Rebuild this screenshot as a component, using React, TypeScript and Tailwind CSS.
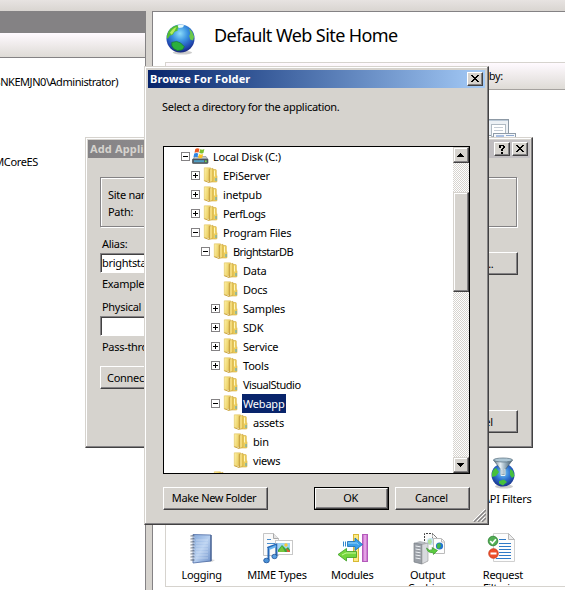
import React from "react";

const raised =
  "border border-t-white border-l-white border-r-[#424142] border-b-[#424142] shadow-[inset_-1px_-1px_0_#848284] bg-[#d6d3ce]";
const raisedSoft =
  "border border-t-[#d6d3ce] border-l-[#d6d3ce] border-r-[#424142] border-b-[#424142] shadow-[inset_-1px_-1px_0_#848284,inset_1px_1px_0_#ffffff] bg-[#d6d3ce]";
const checker =
  "bg-[conic-gradient(#ffffff_25%,#d6d3ce_0_50%,#ffffff_0_75%,#d6d3ce_0)] bg-[length:2px_2px]";

function PlusMinus({ kind }: { kind: string }) {
  return (
    <svg width="9" height="9" shapeRendering="crispEdges" className="block">
      <rect x="0.5" y="0.5" width="8" height="8" fill="#fff" stroke="#848284" />
      <rect x="2" y="4" width="5" height="1" fill="#000" />
      {kind === "+" && <rect x="4" y="2" width="1" height="5" fill="#000" />}
    </svg>
  );
}

function Folder() {
  return (
    <svg width="16" height="16" className="block">
      <defs>
        <linearGradient id="fa" x1="0" y1="0" x2="1" y2="0.3">
          <stop offset="0" stopColor="#fdf2a6" />
          <stop offset="1" stopColor="#e8c858" />
        </linearGradient>
        <linearGradient id="fb" x1="0" y1="0" x2="1" y2="0">
          <stop offset="0" stopColor="#b98f30" />
          <stop offset="0.45" stopColor="#fbe78e" />
          <stop offset="1" stopColor="#e5c04a" />
        </linearGradient>
      </defs>
      <path d="M8 2.500h5.500q.8 0 .8.8v4.700l.7.700v5.500q0 .8-.8.8H8z" fill="#edcf5e" stroke="#d4ad40" strokeWidth=".6" />
      <path d="M14 11v3" stroke="#4ba6cf" strokeWidth="1" />
      <path d="M12.500 3.500v6" stroke="#fff6bc" strokeWidth="1" />
      <path d="M2.300 .8h6.200v13h-6.200z" fill="url(#fa)" stroke="#dfc059" strokeWidth=".6" />
      <path d="M7 2.300l4-1v12.800L7 15.600z" fill="url(#fb)" stroke="#c6a13c" strokeWidth=".5" />
      <path d="M2.300 13.700l4.700 1.800" stroke="#cba53e" strokeWidth="1" />
    </svg>
  );
}

function Disk() {
  return (
    <svg width="17" height="16" className="block">
      <path d="M3 8.500h11l2 3H1z" fill="#c3c9ce" stroke="#7e868c" strokeWidth=".6" />
      <rect x=".3" y="11" width="15.700" height="4.500" rx="1" fill="#566068" stroke="#3b4449" strokeWidth=".6" />
      <rect x="2" y="12.200" width="10" height="2" fill="#4f9ec4" />
      <rect x="13" y="12.500" width="1.600" height="1.600" fill="#6ee04c" />
      <path d="M3.300 1q2-1.500 4.200-.2L6.600 4.600q-2-1-4.100.2z" fill="#ec5b24" />
      <path d="M8.200 1.300q2 1 4.200-.2L11.400 5q-2 1.100-4.200.1z" fill="#7fc32f" />
      <path d="M2.200 5.600Q4.200 4.500 6.300 5.500l-.9 3.800q-1.900-1-4 .1z" fill="#2f86e4" />
      <path d="M7 6q2 1 4.200 0l-1 3.700q-2 1-4.100 0z" fill="#fdc321" />
    </svg>
  );
}

function Globe({ size }: { size: number }) {
  return (
    <svg width={size} height={size} viewBox="0 0 32 32" className="block">
      <defs>
        <radialGradient id="gl" cx=".48" cy=".32" r=".7">
          <stop offset="0" stopColor="#8cdcfa" />
          <stop offset=".4" stopColor="#3a92e0" />
          <stop offset=".8" stopColor="#1f45ae" />
          <stop offset="1" stopColor="#141f70" />
        </radialGradient>
      </defs>
      <ellipse cx="18" cy="29.500" rx="10" ry="2" fill="#aaa" opacity=".6" />
      <circle cx="16" cy="15" r="14.500" fill="url(#gl)" />
      <path d="M2 12Q4 3 13 1l2 2-2 2 0 2-3 1-2 3-3 1-2 3-1 0z" fill="#55bd32" />
      <path d="M5 9q3-5 7-6l-2 4-3 4z" fill="#c6f264" opacity=".85" />
      <path d="M25 5l3 3 2 5-1 4-3-1-1-4 1-2z" fill="#6cc94a" />
      <path d="M7 19l5-1 4 1.500 4 4-2 3-5 1-4-2-2-3z" fill="#2bb03c" stroke="#167627" strokeWidth=".7" />
      <path d="M13 1.500q3-1.500 7 0l-2 2-4 .5z" fill="#e5fbfc" />
    </svg>
  );
}

function FilterGlobe() {
  return (
    <svg width="32" height="32" viewBox="0 0 32 32" className="block">
      <defs>
        <radialGradient id="fg" cx=".5" cy=".4" r=".65">
          <stop offset="0" stopColor="#7bd0f8" />
          <stop offset=".5" stopColor="#2c71d0" />
          <stop offset="1" stopColor="#16277f" />
        </radialGradient>
        <linearGradient id="fn" x1="0" x2="1" y1="0" y2="0">
          <stop offset="0" stopColor="#4d6373" />
          <stop offset=".35" stopColor="#e7f2f8" />
          <stop offset=".65" stopColor="#8ea6b5" />
          <stop offset="1" stopColor="#3d5464" />
        </linearGradient>
      </defs>
      <ellipse cx="17" cy="29.500" rx="9" ry="2" fill="#aaa" opacity=".6" />
      <circle cx="16" cy="18" r="11.500" fill="url(#fg)" />
      <path d="M5 16q1-4 4-5l3 4-3 4-4 1zM23 12l3 2 1.500 5-2.500 2-2-3zM12 24l5-1.500 3 2.500-4 3.500-4-2z" fill="#46c03c" />
      <path d="M6.500 3l7.500 10v5h4v-5L25.500 3z" fill="url(#fn)" stroke="#415766" strokeWidth=".6" />
      <ellipse cx="16" cy="3" rx="9.500" ry="2" fill="#aec7d5" stroke="#556c7b" strokeWidth=".7" />
      <path d="M14 12v6.500h4V12" fill="none" stroke="#e6f3f8" strokeWidth="1" />
    </svg>
  );
}

function Notebook() {
  return (
    <svg width="32" height="32" className="block">
      <defs>
        <linearGradient id="nb" x1="0" y1="0" x2="1" y2="1">
          <stop offset="0" stopColor="#86a9da" />
          <stop offset=".5" stopColor="#b8d0f0" />
          <stop offset="1" stopColor="#6d90c8" />
        </linearGradient>
      </defs>
      <path d="M24 26l5 1-3 2H10z" fill="#ccc" opacity=".7" />
      <path d="M7 1.500l18 .5V28L7 30z" fill="url(#nb)" stroke="#4d6ba4" strokeWidth=".8" />
      <path d="M25 2v26" stroke="#46608f" strokeWidth="1.200" />
      <path d="M10 7h12M10 10h12M10 13h12M10 16h12M10 19h12M10 22h12M10 25h12" stroke="#e0ebfa" strokeWidth=".7" opacity=".7" />
      <path d="M4.500 3h4M4.500 6h4M4.500 9h4M4.500 12h4M4.500 15h4M4.500 18h4M4.500 21h4M4.500 24h4M4.500 27h4" stroke="#5b6573" strokeWidth="1.200" />
      <path d="M4.500 4h4M4.500 7h4M4.500 10h4M4.500 13h4M4.500 16h4M4.500 19h4M4.500 22h4M4.500 25h4" stroke="#e4e8ee" strokeWidth=".8" />
    </svg>
  );
}

function Mime() {
  return (
    <svg width="32" height="32" className="block">
      <path d="M2.500 .5h10l5 5v17h-15z" fill="#fafafa" stroke="#c5c5c5" />
      <path d="M12.500 .5v5h5" fill="#e5e5e5" stroke="#aaa" />
      <path d="M6 6.500h4M6 10.500h8M6 14.500h6" stroke="#4b8dcb" />
      <rect x="14.500" y="7.500" width="17" height="14" fill="#fff" stroke="#c8c8c8" />
      <rect x="17" y="10" width="12" height="9" fill="#9ed4f6" />
      <path d="M17 17l4-5 4 4 2-2 2 3v2H17z" fill="#35a83d" />
      <path d="M17 19l4-6 3 6z" fill="#77c53d" />
      <circle cx="25" cy="12" r="1.700" fill="#fbcb38" />
      <path d="M25 15l4 3v1h-3z" fill="#d95c36" />
      <path d="M7.500 27V14.500l8-3V23" fill="none" stroke="#2566b5" strokeWidth="2" />
      <path d="M8 16l7-3" stroke="#65b2ef" strokeWidth="2" />
      <ellipse cx="5.500" cy="27.500" rx="2.800" ry="2.300" fill="#4a92d8" stroke="#1d4f94" strokeWidth=".8" />
      <ellipse cx="13.500" cy="23.500" rx="2.600" ry="2.200" fill="#5aa0e2" stroke="#1d4f94" strokeWidth=".8" />
    </svg>
  );
}

function Modules() {
  return (
    <svg width="32" height="32" className="block">
      <defs>
        <linearGradient id="pp" x1="0" x2="1" y1="0" y2="0">
          <stop offset="0" stopColor="#b654bd" />
          <stop offset=".5" stopColor="#efb4ee" />
          <stop offset="1" stopColor="#b95cc0" />
        </linearGradient>
      </defs>
      <rect x="17.500" y="1.500" width="5" height="27" fill="#fcea86" stroke="#d8b934" />
      <rect x="26.500" y="1.500" width="5" height="27" fill="url(#pp)" stroke="#b45abb" />
      <path d="M11.500 8.500h7.500V5l7.500 6.500-7.500 6v-4h-7.500z" fill="#3ba0ea" stroke="#176cb5" strokeWidth=".8" />
      <path d="M7.500 8.500v5M9.500 8.500v5" stroke="#3187cd" strokeWidth="1" />
      <path d="M12 10h8.500l2 1.500" fill="none" stroke="#9edbff" />
      <path d="M20.500 18.500h-10V15.500l-8.500 6 8.500 6.500v-3.500h10z" fill="#73d53c" stroke="#3b9d24" strokeWidth=".8" />
      <path d="M20 20h-10l-4 2" fill="none" stroke="#c6f998" />
    </svg>
  );
}

function OutputCaching() {
  return (
    <svg width="34" height="33" className="block">
      <path d="M13.500 14V.5h8l5 5V16" fill="#fafafa" stroke="#444" strokeDasharray="2 1" />
      <path d="M21.500 .5v5h4" fill="none" stroke="#888" strokeDasharray="2 1" />
      <circle cx="19.500" cy="8.500" r="3.500" fill="#c3e4f2" />
      <path d="M17 7l3-1 1 3-2 3-2-2z" fill="#b4e09e" />
      <path d="M22.500 5.500h8l3 3v12h-11z" fill="#fdfdfd" stroke="#bbb" />
      <path d="M30.500 6v3h3" fill="none" stroke="#bbb" />
      <circle cx="28.500" cy="13" r="3.600" fill="#2374ce" />
      <path d="M26 11l3-1 1 3-2 3-2-1z" fill="#41b647" />
      <path d="M3 10l6-2 8 2v18l-6 3-8-2z" fill="#b8bcc1" />
      <path d="M3 10l8 1.500V31l-8-2z" fill="#9a9fa6" stroke="#7b8188" strokeWidth=".7" />
      <path d="M11 11.500l6-1.500v18l-6 3z" fill="#d8dade" stroke="#999" strokeWidth=".6" />
      <path d="M4.500 13l5 .8M4.500 16l5 .8M4.500 19l5 .8M4.500 22l5 .8M4.500 25l5 .8" stroke="#eef1f4" />
      <path d="M15.500 15q3 3.500 6 1.500l-.5-2 5.500 3-4 4-.7-2q-5 1-6.300-4.500z" fill="#5ccb40" stroke="#2c8b20" strokeWidth=".6" />
    </svg>
  );
}

function RequestFiltering() {
  return (
    <svg width="32" height="32" className="block">
      <path d="M6.500 .5h15l6 6v22h-21z" fill="#fdfdfd" stroke="#d0d0d0" />
      <path d="M21.500 .5v6h6z" fill="#eee" stroke="#b9b9b9" />
      <path d="M12 6.500h7M12 10.500h12M12 13.500h12M12 16.500h12M12 19.500h12M12 22.500h12M9 25.500h15" stroke="#2f7ac7" />
      <circle cx="6" cy="8" r="4.800" fill="#53ae55" stroke="#2b7d31" strokeWidth=".8" />
      <path d="M3.200 8l2.200 2.200 3.500-4" fill="none" stroke="#fff" strokeWidth="1.700" />
      <circle cx="6.500" cy="20.500" r="4.800" fill="#ee4f2a" stroke="#c5391b" strokeWidth=".8" />
      <rect x="3.500" y="19.500" width="6" height="2" fill="#fff" />
    </svg>
  );
}

function Glyph({ kind }: { kind: string }) {
  return (
    <svg width="8" height="8" shapeRendering="crispEdges" className="block overflow-visible">
      {kind === "x" && <path d="M0 0h2v1h1v1h2v-1h1v-1h2v1h-1v1h-1v1h-1v1h1v1h1v1h1v1h-2v-1h-1v-1h-2v1h-1v1h-2v-1h1v-1h1v-1h1v-1h-1v-1h-1v-1h-1z" fill="#000" />}
      {kind === "?" && <path d="M1 0h5v1h1v2h-1v1h-1v2h-2v-2h1v-1h1v-2h-2v2h-2v-2h0zM3 7h2v2h-2z" fill="#000" />}
      {kind === "up" && <path d="M3 2h1v1h1v1h1v1h1v1h-7v-1h1v-1h1v-1h1z" fill="#000" />}
      {kind === "down" && <path d="M0 2h7v1h-1v1h-1v1h-1v1h-1v-1h-1v-1h-1v-1h-1z" fill="#000" />}
    </svg>
  );
}

function TitleButton({ kind }: { kind: string }) {
  return (
    <div className={`${raised} flex h-[14px] w-[16px] items-center justify-center pr-px pb-px`}>
      <Glyph kind={kind} />
    </div>
  );
}

const rows: [number, string, string][] = [
  [0, "-", "Local Disk (C:)"],
  [1, "+", "EPiServer"],
  [1, "+", "inetpub"],
  [1, "+", "PerfLogs"],
  [1, "-", "Program Files"],
  [2, "-", "BrightstarDB"],
  [3, "", "Data"],
  [3, "", "Docs"],
  [3, "+", "Samples"],
  [3, "+", "SDK"],
  [3, "+", "Service"],
  [3, "+", "Tools"],
  [3, "", "VisualStudio"],
  [3, "-", "Webapp"],
  [4, "", "assets"],
  [4, "", "bin"],
  [4, "", "views"],
  [2, "", ""],
];
const indent = ["pl-[17px]", "pl-[27px]", "pl-[37px]", "pl-[47px]", "pl-[57px]"];

const trackings: Record<string, string> = {
  BrightstarDB: "tracking-[-0.600px]",
  "Program Files": "tracking-[-0.200px]",
  VisualStudio: "tracking-[-0.500px]",
  "Local Disk (C:)": "tracking-[-0.200px]",
  PerfLogs: "tracking-[-0.400px]",
};

function Tree() {
  return (
    <div className="h-[326px] flex-1 overflow-hidden">
      {rows.map(([depth, mark, name], i) => (
        <div key={i} className={`flex h-[19px] items-center ${indent[depth]}`}>
          <div className="w-[11px]">{mark && <PlusMinus kind={mark} />}</div>
          <div className="w-[20px] pb-px">{depth === 0 ? <Disk /> : <Folder />}</div>
          <span className={`h-[19px] pr-[2px] pl-px leading-[19px] ${trackings[name] ?? "tracking-[-0.200px]"} ${name === "Webapp" ? "bg-[#08246b] text-white" : ""}`}>{name}</span>
        </div>
      ))}
    </div>
  );
}

function BrowseDialog() {
  return (
    <div className={`${raisedSoft} absolute top-[66px] left-[144px] flex h-[459px] w-[345px] flex-col p-[3px]`}>
      <div className="flex h-[18px] items-center bg-linear-to-r from-[#08246b] to-[#a5cbf7] pr-[2px] pl-[2px]">
        <span className="flex-1 text-[11px] font-bold tracking-[0.120px] text-white">Browse For Folder</span>
        <TitleButton kind="x" />
      </div>
      <div className="mt-[10px] ml-[14px] h-[18px] leading-[18px]">Select a directory for the application.</div>
      <div className="mt-[30px] ml-[15px] flex h-[328px] w-[307px] border border-black bg-white">
        <Tree />
        <div className={`flex w-[16px] flex-col ${checker}`}>
          <div className={`${raisedSoft} flex h-[16px] items-center justify-center`}><Glyph kind="up" /></div>
          <div className={`${raisedSoft} mt-[29px] h-[100px]`} />
          <div className={`${raisedSoft} mt-auto flex h-[16px] items-center justify-center`}><Glyph kind="down" /></div>
        </div>
      </div>
      <div className="mt-[13px] ml-[15px] flex tracking-[-0.400px]">
        <div className={`${raised} flex h-[23px] w-[105px] items-center justify-center pr-[3px] pb-px tracking-[-0.350px]`}>Make New Folder</div>
        <div className="ml-[46px] flex h-[23px] w-[75px] border border-black">
          <div className={`${raised} flex flex-1 items-center justify-center pr-[2px] pb-px`}>OK</div>
        </div>
        <div className={`${raised} ml-[6px] flex h-[23px] w-[75px] items-center justify-center pr-[2px] pb-px tracking-[-0.200px]`}>Cancel</div>
      </div>
      <svg width="13" height="13" className="absolute right-[2px] bottom-[2px]">
        <path d="M1 13L13 1M5 13l8-8M9 13l4-4" stroke="#848284" strokeWidth="1.400" />
        <path d="M0 12L12 0M4 12l8-8M8 12l4-4" stroke="#fff" strokeWidth="1" />
      </svg>
    </div>
  );
}

const sunken =
  "border border-t-[#848284] border-l-[#848284] border-r-white border-b-white shadow-[inset_1px_1px_0_#424142] bg-white";

function AddApplicationDialog() {
  return (
    <div className={`${raisedSoft} absolute top-[137px] left-[85px] flex h-[311px] w-[448px] flex-col p-[2px] whitespace-nowrap`}>
      <div className="flex h-[18px] items-center bg-linear-to-r from-[#848284] to-[#c6c3c6] pr-[2px] pl-[2px]">
        <span className="flex-1 text-[11px] font-bold tracking-[0.150px] text-[#d6d3ce]">Add Application</span>
        <div className="flex gap-[2px]">
          <TitleButton kind="?" />
          <TitleButton kind="x" />
        </div>
      </div>
      <div className="mt-[19px] ml-[12px] h-[50px] w-[417px] border border-[#848284] pt-[8px] pl-[7px] leading-[17px] shadow-[inset_1px_1px_0_#fff,1px_1px_0_#fff]">
        <div>Site name:</div>
        <div>Path:</div>
      </div>
      <div className="mt-px ml-[12px] flex w-[418px] justify-between">
        <div className="w-[330px]">
          <div className="mt-[7px] h-[18px] pl-[2px] leading-[18px]">Alias:</div>
          <div className={`${sunken} h-[20px] pl-px leading-[18px]`}>brightstardb</div>
          <div className="mt-[2px] h-[18px] pl-[2px] leading-[18px]">Example: sales</div>
          <div className="mt-[5px] h-[18px] pl-[2px] leading-[18px]">Physical path:</div>
          <div className={`${sunken} h-[20px]`} />
          <div className="mt-[2px] h-[18px] pl-[2px] leading-[18px]">Pass-through authentication</div>
          <div className={`${raised} mt-[10px] h-[23px] w-[90px] pl-[6px] leading-[21px]`}>Connect as...</div>
        </div>
        <div className="flex flex-col items-end">
          <div className={`${raised} mt-[24px] h-[23px] w-[62px] pl-[5px] text-center leading-[21px]`}>...</div>
          <div className={`${raised} mt-[135px] h-[23px] w-[86px] pl-[3px] text-center leading-[21px]`}>Cancel</div>
        </div>
      </div>
    </div>
  );
}

function Feature({ icon, label }: { icon: React.ReactNode; label: string }) {
  return (
    <div className="flex w-[75.300px] shrink-0 flex-col items-center">
      <div className="h-[35px]">{icon}</div>
      <div className="w-[64px] text-center leading-[13px]">{label}</div>
    </div>
  );
}

export default function App() {
  return (
    <div className="relative flex h-[590px] w-[565px] flex-col overflow-hidden bg-[#d6d3ce] font-['Noto_Sans','Open_Sans',sans-serif] text-[11px] tracking-[-0.300px] text-black">
      <div className="h-[11px] shrink-0 bg-linear-to-b from-[#e7e3e1] to-[#d9d5d1]" />
      <div className="flex min-h-0 flex-1">
        <div className="flex w-[146px] flex-col border-t border-r border-[#848284] bg-white">
          <div className="h-[21px] bg-[#848284]" />
          <div className="h-[25px] border-b border-[#848284] bg-linear-to-b from-[#fffaff] to-[#dedbd6]" />
          <div className="mt-[15px] flex h-[18px] w-[118px] justify-end leading-[18px] tracking-[-0.450px] whitespace-nowrap">SNKEMJN0\Administrator)</div>
          <div className="mt-[62px] flex h-[18px] w-[38px] justify-end leading-[18px] tracking-[-0.350px] whitespace-nowrap">MCoreES</div>
        </div>
        <div className="ml-[6px] flex min-w-0 flex-1 flex-col border-t border-l border-[#848284] bg-white pl-[12px]">
          <div className="flex h-[50px] items-start pt-[12px]">
            <Globe size={31} />
            <span className="ml-[18px] -mt-[2px] text-[18px] leading-[26px] tracking-[-0.580px]">Default Web Site Home</span>
          </div>
          <div className="flex h-[525px] flex-col overflow-hidden border-y border-l border-[#d6d3ce]">
            <div className="flex h-[27px] shrink-0 items-center border-b border-[#a5a29f] bg-linear-to-b from-[#fffaff] to-[#dedbd6] pl-[277px] whitespace-nowrap">
              <span className="w-[60px] text-right">Group by:</span>
            </div>
            <div className="mt-[29px] flex h-[32px] shrink-0 pl-[317px]">
              <svg width="36" height="32" shapeRendering="crispEdges" className="block">
                <rect x="1.500" y=".5" width="24" height="16" fill="#edf1f5" stroke="#8d99a5" />
                <rect x="2" y="1" width="23" height="1" fill="#bac8d6" />
                <rect x="8.500" y="5.500" width="14" height="12" fill="#fff" stroke="#b0bac3" />
                <path d="M11 8.500h9M11 11.500h9" stroke="#c6cdd5" />
                <rect x="10.500" y="14.500" width="22" height="14" fill="#f5f8fb" stroke="#8f9ca9" />
                <rect x="13" y="16" width="8" height="5" fill="#a9bfe2" />
                <path d="M23 16.500h8" stroke="#8ea8cf" />
              </svg>
            </div>
            <div className="mt-[306px] flex shrink-0 pl-[299px]">
              <Feature icon={<FilterGlobe />} label="ISAPI Filters" />
            </div>
            <div className="mt-[28px] -ml-[2px] flex shrink-0">
              <Feature icon={<Notebook />} label="Logging" />
              <Feature icon={<Mime />} label="MIME Types" />
              <Feature icon={<Modules />} label="Modules" />
              <Feature icon={<OutputCaching />} label="Output Caching" />
              <Feature icon={<RequestFiltering />} label="Request Filtering" />
            </div>
          </div>
        </div>
      </div>
      <AddApplicationDialog />
      <BrowseDialog />
    </div>
  );
}
